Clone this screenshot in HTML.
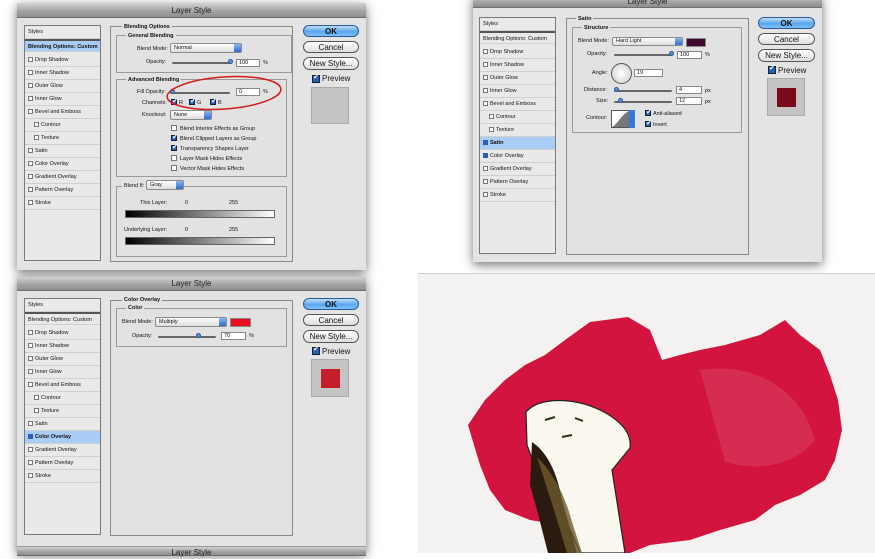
<!DOCTYPE html>
<html><head><meta charset="utf-8"><style>
*{margin:0;padding:0;box-sizing:border-box}
body{width:875px;height:553px;background:#fff;position:relative;overflow:hidden;font-family:"Liberation Sans",sans-serif;color:#111}
div,span{position:absolute}
.dlg{background:#e4e4e4;box-shadow:0 3px 10px rgba(0,0,0,.55)}
.tb{background:linear-gradient(#d2d2d2,#a2a2a2 60%,#8e8e8e);font-size:8px;text-align:center;color:#222;border-bottom:1px solid #6e6e6e}
.list{background:#e9e9e9;border:1px solid #7a7a7a}
.row{left:0;right:0;height:13px;border-bottom:1px solid #d0d0d0;font-size:5.5px;line-height:12px;padding-left:3px;white-space:nowrap}
.row i{display:inline-block;width:5px;height:5px;border:1px solid #777;background:#fafafa;vertical-align:-1px;margin-right:2px}
.row b{display:inline-block;width:5px;height:5px;background:#2c5fb5;vertical-align:-1px;margin-right:2px}
.sel{background:#aacdf5}
.panel{border:1px solid #8a8a8a;background:#e2e2e2}
.box{border:1px solid #9a9a9a}
.t{font-size:5.5px;white-space:nowrap;line-height:6px}
.bold{font-weight:bold}
.sel2{background:linear-gradient(#fff,#ddd);border:1px solid #8a8a8a;border-radius:2px;font-size:5.5px;line-height:8px;padding-left:3px}
.sel2:after{content:"";position:absolute;right:0;top:0;bottom:0;width:7px;background:linear-gradient(#8ab8f0,#2e6ad0);border-radius:0 1px 1px 0}
.inp{background:#fff;border:1px solid #888;font-size:5.5px;line-height:7px;padding-left:2px}
.sl{height:2px;background:#666;border-radius:1px}
.kn{width:5px;height:5px;border-radius:50%;background:#5a8fd8;border:1px solid #2a5aa0}
.btn{border:1px solid #555;border-radius:7px;background:linear-gradient(#fff,#ddd);font-size:8px;text-align:center;line-height:11px}
.ok{background:linear-gradient(#bfe0ff,#5aa6ee 55%,#7fc0fb);border-color:#2a5a9a;font-weight:bold}
.cb{width:6px;height:6px;border:1px solid #777;background:#fff}
.ck{width:6px;height:6px;background:#2b5fb7;border:1px solid #123}
.ck:after{content:"✔";position:absolute;left:0;top:-3px;font-size:7px;color:#fff}
.grad{background:linear-gradient(90deg,#000,#fff);border:1px solid #666}
</style></head><body>

<!-- Dialog 1 -->
<div class="dlg" style="left:17px;top:3px;width:349px;height:267px"></div>
<div class="tb" style="left:17px;top:3px;width:349px;height:15px;line-height:15px">Layer Style</div>
<div class="list" style="left:24px;top:25px;width:77px;height:236px">
<div class="row" style="top:0">Styles</div>
<div class="row sel bold" style="top:13px;border-top:2px solid #555">Blending Options: Custom</div>
<div class="row" style="top:28px"><i></i>Drop Shadow</div>
<div class="row" style="top:41px"><i></i>Inner Shadow</div>
<div class="row" style="top:54px"><i></i>Outer Glow</div>
<div class="row" style="top:67px"><i></i>Inner Glow</div>
<div class="row" style="top:80px"><i></i>Bevel and Emboss</div>
<div class="row" style="top:93px;padding-left:9px"><i></i>Contour</div>
<div class="row" style="top:106px;padding-left:9px"><i></i>Texture</div>
<div class="row" style="top:119px"><i></i>Satin</div>
<div class="row" style="top:132px"><i></i>Color Overlay</div>
<div class="row" style="top:145px"><i></i>Gradient Overlay</div>
<div class="row" style="top:158px"><i></i>Pattern Overlay</div>
<div class="row" style="top:171px"><i></i>Stroke</div>
</div>
<div class="panel" style="left:110px;top:26px;width:183px;height:236px"></div>
<span class="t bold" style="left:122px;top:24px;background:#e2e2e2;padding:0 2px">Blending Options</span>
<div class="box" style="left:116px;top:35px;width:176px;height:38px"></div>
<span class="t bold" style="left:126px;top:33px;background:#e2e2e2;padding:0 2px">General Blending</span>
<span class="t" style="left:137px;top:46px">Blend Mode:</span>
<div class="sel2" style="left:170px;top:43px;width:72px;height:10px">Normal</div>
<span class="t" style="left:146px;top:59px">Opacity:</span>
<div class="sl" style="left:172px;top:62px;width:60px"></div><div class="kn" style="left:228px;top:59px"></div>
<div class="inp" style="left:236px;top:59px;width:24px;height:8px">100</div><span class="t" style="left:263px;top:60px">%</span>
<div class="box" style="left:116px;top:79px;width:171px;height:98px"></div>
<span class="t bold" style="left:126px;top:77px;background:#e2e2e2;padding:0 2px">Advanced Blending</span>
<span class="t" style="left:137px;top:89px">Fill Opacity:</span>
<div class="sl" style="left:170px;top:92px;width:60px"></div><div class="kn" style="left:170px;top:89px"></div>
<div class="inp" style="left:236px;top:88px;width:24px;height:8px">0</div><span class="t" style="left:263px;top:89px">%</span>
<span class="t" style="left:142px;top:100px">Channels:</span>
<div class="ck" style="left:171px;top:99px"></div><span class="t" style="left:179px;top:100px">R</span>
<div class="ck" style="left:189px;top:99px"></div><span class="t" style="left:197px;top:100px">G</span>
<div class="ck" style="left:210px;top:99px"></div><span class="t" style="left:218px;top:100px">B</span>
<span class="t" style="left:142px;top:112px">Knockout:</span>
<div class="sel2" style="left:170px;top:110px;width:42px;height:10px">None</div>
<div class="cb" style="left:171px;top:125px"></div><span class="t" style="left:180px;top:126px">Blend Interior Effects as Group</span>
<div class="ck" style="left:171px;top:135px"></div><span class="t" style="left:180px;top:136px">Blend Clipped Layers as Group</span>
<div class="ck" style="left:171px;top:145px"></div><span class="t" style="left:180px;top:146px">Transparency Shapes Layer</span>
<div class="cb" style="left:171px;top:155px"></div><span class="t" style="left:180px;top:156px">Layer Mask Hides Effects</span>
<div class="cb" style="left:171px;top:165px"></div><span class="t" style="left:180px;top:166px">Vector Mask Hides Effects</span>
<div class="box" style="left:116px;top:186px;width:171px;height:71px"></div>
<span class="t" style="left:122px;top:183px;background:#e2e2e2;padding:0 2px">Blend If:</span>
<div class="sel2" style="left:146px;top:180px;width:38px;height:10px">Gray</div>
<span class="t" style="left:140px;top:200px">This Layer:</span><span class="t" style="left:185px;top:200px">0</span><span class="t" style="left:229px;top:200px">255</span>
<div class="grad" style="left:125px;top:210px;width:150px;height:8px"></div>
<span class="t" style="left:124px;top:227px">Underlying Layer:</span><span class="t" style="left:185px;top:227px">0</span><span class="t" style="left:229px;top:227px">255</span>
<div class="grad" style="left:125px;top:237px;width:150px;height:8px"></div>
<div class="btn ok" style="left:303px;top:25px;width:56px;height:12px">OK</div>
<div class="btn" style="left:303px;top:41px;width:56px;height:12px">Cancel</div>
<div class="btn" style="left:303px;top:57px;width:56px;height:13px">New Style...</div>
<div class="ck" style="left:312px;top:75px;width:8px;height:8px"></div><span class="t" style="left:322px;top:74px;font-size:8px;line-height:9px">Preview</span>
<div style="left:311px;top:87px;width:38px;height:37px;background:#c4c4c4;border:1px solid #aaa"></div>
<svg style="position:absolute;left:0;top:0" width="875" height="553"><ellipse cx="224" cy="93" rx="57" ry="16" transform="rotate(-4 224 93)" fill="none" stroke="#d21a1a" stroke-width="1.5"/></svg>

<!-- Dialog 2 -->
<div class="dlg" style="left:17px;top:277px;width:349px;height:276px"></div>
<div class="tb" style="left:17px;top:277px;width:349px;height:14px;line-height:14px">Layer Style</div>
<div class="list" style="left:24px;top:298px;width:77px;height:237px">
<div class="row" style="top:0">Styles</div>
<div class="row" style="top:13px;border-top:2px solid #555">Blending Options: Custom</div>
<div class="row" style="top:28px"><i></i>Drop Shadow</div>
<div class="row" style="top:41px"><i></i>Inner Shadow</div>
<div class="row" style="top:54px"><i></i>Outer Glow</div>
<div class="row" style="top:67px"><i></i>Inner Glow</div>
<div class="row" style="top:80px"><i></i>Bevel and Emboss</div>
<div class="row" style="top:93px;padding-left:9px"><i></i>Contour</div>
<div class="row" style="top:106px;padding-left:9px"><i></i>Texture</div>
<div class="row" style="top:119px"><i></i>Satin</div>
<div class="row sel bold" style="top:132px"><b></b>Color Overlay</div>
<div class="row" style="top:145px"><i></i>Gradient Overlay</div>
<div class="row" style="top:158px"><i></i>Pattern Overlay</div>
<div class="row" style="top:171px"><i></i>Stroke</div>
</div>
<div class="panel" style="left:110px;top:300px;width:183px;height:236px"></div>
<span class="t bold" style="left:122px;top:297px;background:#e2e2e2;padding:0 2px">Color Overlay</span>
<div class="box" style="left:116px;top:308px;width:171px;height:39px"></div>
<span class="t bold" style="left:126px;top:305px;background:#e2e2e2;padding:0 2px">Color</span>
<span class="t" style="left:122px;top:319px">Blend Mode:</span>
<div class="sel2" style="left:155px;top:317px;width:72px;height:10px">Multiply</div>
<div style="left:230px;top:318px;width:21px;height:9px;background:#e8101e;border:1px solid #888"></div>
<span class="t" style="left:132px;top:333px">Opacity:</span>
<div class="sl" style="left:158px;top:336px;width:58px"></div><div class="kn" style="left:196px;top:333px"></div>
<div class="inp" style="left:221px;top:332px;width:25px;height:8px">70</div><span class="t" style="left:249px;top:333px">%</span>
<div class="btn ok" style="left:303px;top:298px;width:56px;height:12px">OK</div>
<div class="btn" style="left:303px;top:314px;width:56px;height:12px">Cancel</div>
<div class="btn" style="left:303px;top:330px;width:56px;height:13px">New Style...</div>
<div class="ck" style="left:312px;top:347px;width:8px;height:8px"></div><span class="t" style="left:322px;top:347px;font-size:8px;line-height:9px">Preview</span>
<div style="left:311px;top:359px;width:38px;height:38px;background:#c4c4c4;border:1px solid #aaa"></div>
<div style="left:321px;top:369px;width:19px;height:19px;background:#c41e2a"></div>
<div class="tb" style="left:17px;top:546px;width:349px;height:10px;line-height:12px;border-top:1px solid #999">Layer Style</div>

<!-- Dialog 3 -->
<div class="dlg" style="left:473px;top:-5px;width:349px;height:267px"></div>
<div class="tb" style="left:473px;top:-5px;width:349px;height:13px;line-height:13px">Layer Style</div>
<div class="list" style="left:479px;top:17px;width:77px;height:237px">
<div class="row" style="top:0">Styles</div>
<div class="row" style="top:13px;border-top:2px solid #555">Blending Options: Custom</div>
<div class="row" style="top:28px"><i></i>Drop Shadow</div>
<div class="row" style="top:41px"><i></i>Inner Shadow</div>
<div class="row" style="top:54px"><i></i>Outer Glow</div>
<div class="row" style="top:67px"><i></i>Inner Glow</div>
<div class="row" style="top:80px"><i></i>Bevel and Emboss</div>
<div class="row" style="top:93px;padding-left:9px"><i></i>Contour</div>
<div class="row" style="top:106px;padding-left:9px"><i></i>Texture</div>
<div class="row sel bold" style="top:119px"><b></b>Satin</div>
<div class="row" style="top:132px"><b></b>Color Overlay</div>
<div class="row" style="top:145px"><i></i>Gradient Overlay</div>
<div class="row" style="top:158px"><i></i>Pattern Overlay</div>
<div class="row" style="top:171px"><i></i>Stroke</div>
</div>
<div class="panel" style="left:566px;top:18px;width:183px;height:237px"></div>
<span class="t bold" style="left:576px;top:16px;background:#e2e2e2;padding:0 2px">Satin</span>
<div class="box" style="left:572px;top:27px;width:170px;height:106px"></div>
<span class="t bold" style="left:582px;top:25px;background:#e2e2e2;padding:0 2px">Structure</span>
<span class="t" style="left:578px;top:38px">Blend Mode:</span>
<div class="sel2" style="left:612px;top:37px;width:71px;height:9px;line-height:7px">Hard Light</div>
<div style="left:686px;top:38px;width:20px;height:9px;background:#3d0a2e;border:1px solid #888"></div>
<span class="t" style="left:587px;top:51px">Opacity:</span>
<div class="sl" style="left:614px;top:54px;width:58px"></div><div class="kn" style="left:669px;top:51px"></div>
<div class="inp" style="left:677px;top:51px;width:25px;height:8px">100</div><span class="t" style="left:705px;top:52px">%</span>
<span class="t" style="left:592px;top:70px">Angle:</span>
<div style="left:611px;top:63px;width:21px;height:21px;border-radius:50%;border:1px solid #555;background:radial-gradient(#fff,#ccc)"></div>
<div class="inp" style="left:634px;top:69px;width:29px;height:8px">19</div>
<span class="t" style="left:584px;top:87px">Distance:</span>
<div class="sl" style="left:614px;top:90px;width:58px"></div><div class="kn" style="left:614px;top:87px"></div>
<div class="inp" style="left:676px;top:86px;width:26px;height:8px">4</div><span class="t" style="left:705px;top:88px">px</span>
<span class="t" style="left:596px;top:98px">Size:</span>
<div class="sl" style="left:614px;top:101px;width:58px"></div><div class="kn" style="left:618px;top:98px"></div>
<div class="inp" style="left:676px;top:97px;width:26px;height:8px">12</div><span class="t" style="left:705px;top:99px">px</span>
<span class="t" style="left:586px;top:115px">Contour:</span>
<svg style="position:absolute;left:611px;top:110px" width="24" height="18"><rect x=".5" y=".5" width="18" height="17" fill="#fff" stroke="#555"/><path d="M1 17 C6 15 10 5 18 1 L18 17Z" fill="#777"/><rect x="18" y="0" width="6" height="18" fill="#3a78d8"/></svg>
<div class="ck" style="left:645px;top:110px"></div><span class="t" style="left:653px;top:111px">Anti-aliased</span>
<div class="ck" style="left:645px;top:121px"></div><span class="t" style="left:653px;top:122px">Invert</span>
<div class="btn ok" style="left:758px;top:17px;width:57px;height:12px">OK</div>
<div class="btn" style="left:758px;top:33px;width:57px;height:12px">Cancel</div>
<div class="btn" style="left:758px;top:49px;width:57px;height:13px">New Style...</div>
<div class="ck" style="left:768px;top:66px;width:8px;height:8px"></div><span class="t" style="left:778px;top:66px;font-size:8px;line-height:9px">Preview</span>
<div style="left:767px;top:78px;width:38px;height:38px;background:#c4c4c4;border:1px solid #aaa"></div>
<div style="left:777px;top:88px;width:19px;height:19px;background:#7a0a1a"></div>

<!-- Artwork -->
<div style="left:418px;top:273px;width:457px;height:280px;background:#f3f2f0;border-top:1px solid #ccc"></div>
<svg style="position:absolute;left:0;top:0" width="875" height="553">
<path d="M468 425 L485 400 L505 380 L525 365 L545 355 L565 340 L590 322 L628 317 L650 330 L662 360 L680 355 L700 350 L725 345 L760 335 L785 320 L800 335 L820 350 L830 375 L838 400 L842 430 L835 460 L825 480 L800 495 L775 505 L755 520 L720 530 L690 540 L650 545 L630 553 L600 553 L580 540 L560 525 L530 520 L505 510 L490 490 L480 465Z" fill="#d2143e"/>
<path d="M700 370 C750 362 800 385 815 440 C795 465 760 472 725 462 Z" fill="#dc4a68" opacity=".45"/>
<path d="M526 412 C540 396 575 398 600 410 C620 420 632 432 630 448 L612 470 L625 553 L580 553 L562 510 L537 472 L527 445Z" fill="#fbf9ef" stroke="#222" stroke-width="1.2"/>
<path d="M532 442 C547 452 557 472 562 500 L577 553 L548 553 L537 510 L530 485 Z" fill="#2a1a10"/>
<path d="M537 457 C552 472 564 492 572 522 L582 553 L567 553 L554 510Z" fill="#6b5a2a" opacity=".8"/>
<path d="M545 420 l10 -3 M575 418 l8 3 M562 437 l10 -2" stroke="#3a2a1a" stroke-width="2"/>
</svg>
</body></html>
